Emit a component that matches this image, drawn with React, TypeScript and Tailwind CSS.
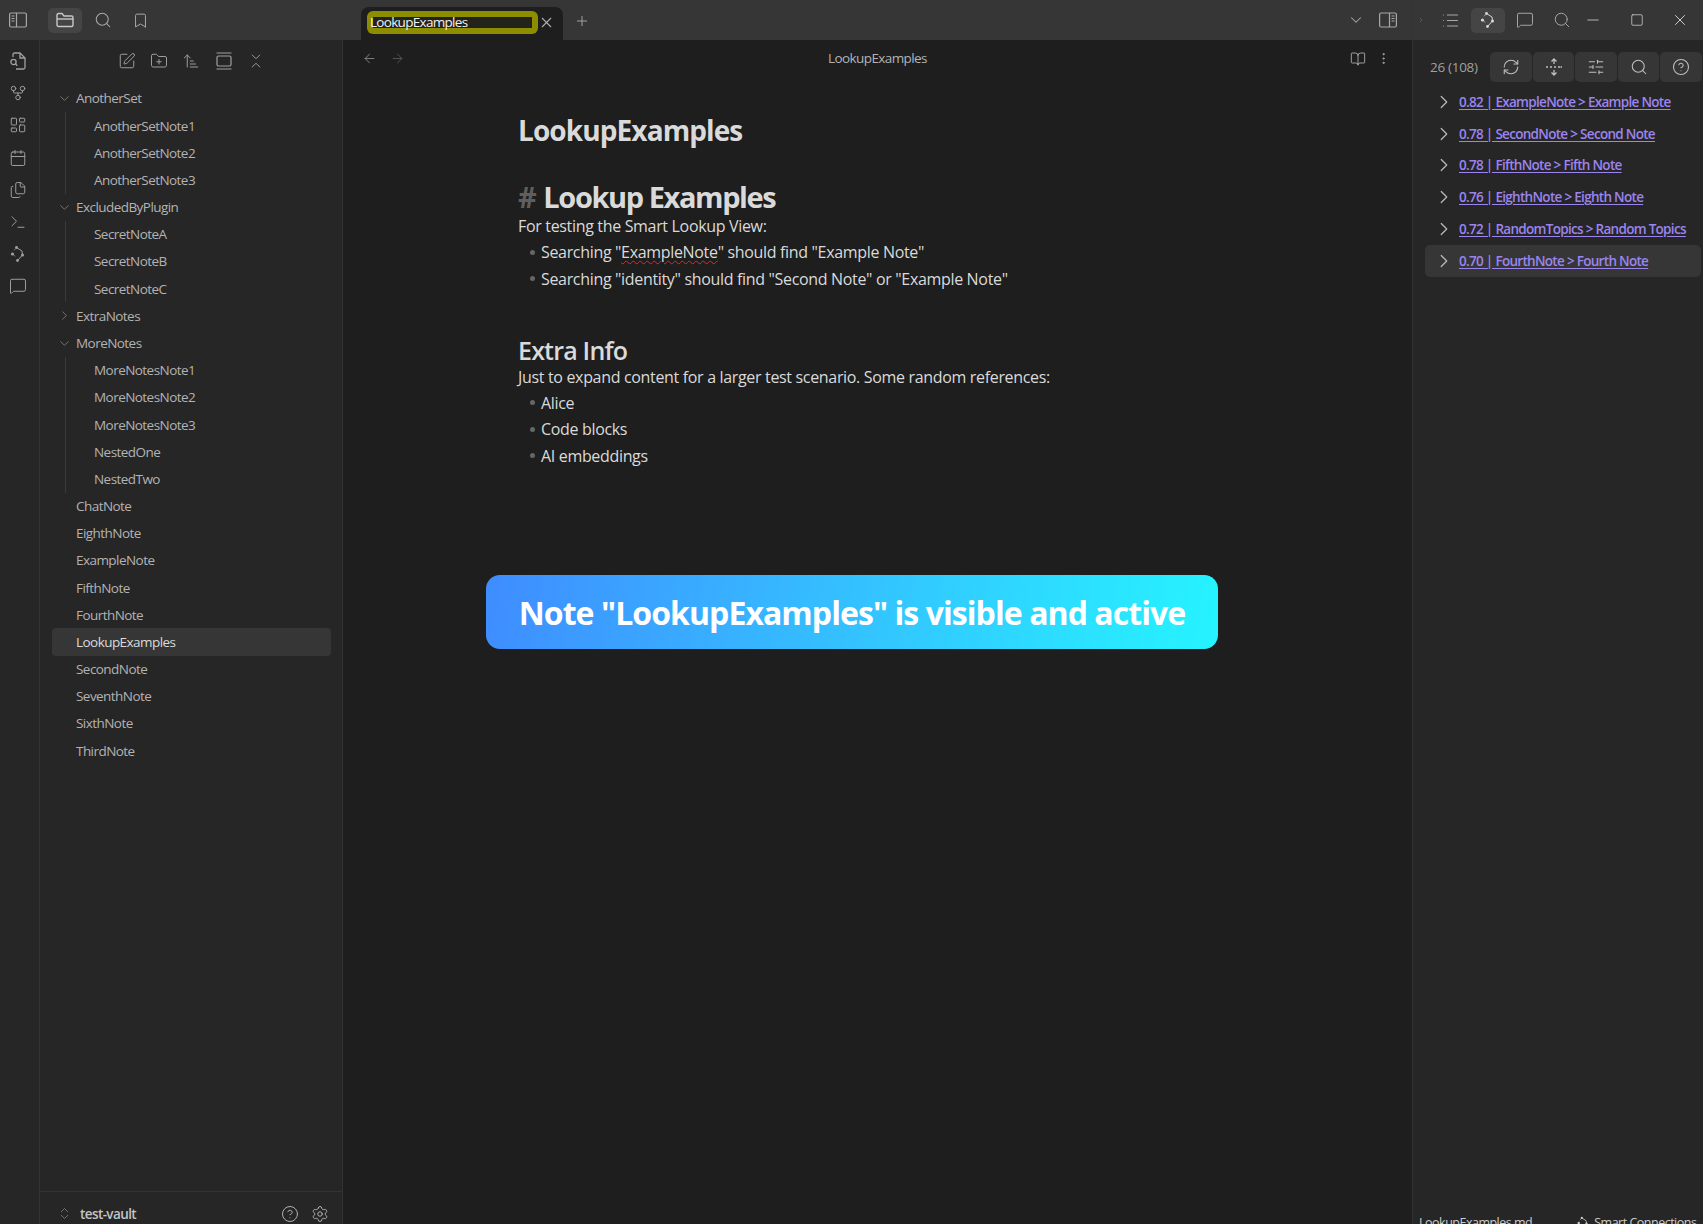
import React from 'react';
import {
  ArrowLeft, ArrowRight, BookOpen, Bookmark, Calendar, ChevronDown, ChevronRight, ChevronsDownUp, ChevronsUpDown,
  CircleHelp, Files, FolderPlus, GitFork, LayoutDashboard, List, MessageSquare, Minus, MoreVertical, Plus,
  RefreshCw, Search, Settings, SlidersHorizontal, Square, SquarePen, Terminal, X, ArrowUpNarrowWide,
} from 'lucide-react';

const SmartIcon = ({ size = 18 }: { size?: number }) => (
  <svg width={size} height={size} viewBox="0 0 18 18" fill="none" stroke="currentColor" strokeWidth="1">
    <path d="M7.500 2.500 L13 6 L13.500 10 L8.500 15.500" />
    <path d="M7.500 2.500 L5 5.500" strokeDasharray="1.200 1.200" />
    <path d="M3.500 9 L7 12" strokeDasharray="1.200 1.200" />
    <circle cx="7.500" cy="2.500" r="1.400" fill="currentColor" stroke="none" />
    <circle cx="3.500" cy="9" r="1.600" fill="currentColor" stroke="none" />
    <circle cx="13.500" cy="10" r="1.500" fill="currentColor" stroke="none" />
    <circle cx="8.500" cy="15.500" r="1.400" fill="currentColor" stroke="none" />
  </svg>
);

const SidebarToggle = ({ right }: { right?: boolean }) => (
  <svg width="18" height="16" viewBox="0 0 18 16" fill="none" stroke="currentColor" strokeWidth="1.2">
    <rect x="0.6" y="1" width="16.8" height="14" rx="1.5" />
    <path d={right ? 'M10.5 1v14' : 'M7.5 1v14'} />
    <path d={right ? 'M12.5 4h3M12.5 6.5h3M12.5 9h3' : 'M2.5 4h3M2.5 6.5h3M2.5 9h3'} />
  </svg>
);

const FolderIcon = () => (
  <svg width="18" height="16" viewBox="0 0 18 16" fill="none" stroke="currentColor" strokeWidth="1.4">
    <path d="M1 3a1.5 1.5 0 0 1 1.5-1.5H6L8 4h7.5A1.5 1.5 0 0 1 17 5.5V13a1.5 1.5 0 0 1-1.5 1.5h-13A1.5 1.5 0 0 1 1 13Z" />
    <path d="M1 7h16" />
  </svg>
);

const NoteSearchIcon = () => (
  <svg width="18" height="18" viewBox="0 0 18 18" fill="none" stroke="currentColor" strokeWidth="1.3">
    <path d="M4 5V2.5A1.5 1.5 0 0 1 5.500 1H11l5 5v9.500a1.500 1.500 0 0 1-1.500 1.500H7" />
    <path d="M11 1v5h5" />
    <circle cx="4.500" cy="10" r="2.600" />
    <path d="m6.500 12 1.800 1.800" />
  </svg>
);

const StackIcon = () => (
  <svg width="18" height="18" viewBox="0 0 18 18" fill="none" stroke="currentColor" strokeWidth="1.2">
    <path d="M1.500 1h15M1.500 17h15" />
    <rect x="2" y="4" width="14" height="10" rx="1.500" />
  </svg>
);

const FoldIcon = () => (
  <svg width="18" height="18" viewBox="0 0 18 18" fill="none" stroke="currentColor" strokeWidth="1.3">
    <path d="M1 9h2M5 9h2M9 9h2M13 9h2M15.500 9h1.500" />
    <path d="M9 1v5M6.500 3.500 9 1l2.500 2.500M9 17v-5M6.500 14.500 9 17l2.500-2.500" />
  </svg>
);

const tree = [
  { name: 'AnotherSet', open: true, kids: ['AnotherSetNote1', 'AnotherSetNote2', 'AnotherSetNote3'] },
  { name: 'ExcludedByPlugin', open: true, kids: ['SecretNoteA', 'SecretNoteB', 'SecretNoteC'] },
  { name: 'ExtraNotes', open: false, kids: [] },
  { name: 'MoreNotes', open: true, kids: ['MoreNotesNote1', 'MoreNotesNote2', 'MoreNotesNote3', 'NestedOne', 'NestedTwo'] },
];
const notes = ['ChatNote', 'EighthNote', 'ExampleNote', 'FifthNote', 'FourthNote', 'LookupExamples', 'SecondNote', 'SeventhNote', 'SixthNote', 'ThirdNote'];
const results = [
  '0.82 | ExampleNote > Example Note',
  '0.78 | SecondNote > Second Note',
  '0.78 | FifthNote > Fifth Note',
  '0.76 | EighthNote > Eighth Note',
  '0.72 | RandomTopics > Random Topics',
  '0.70 | FourthNote > Fourth Note',
];

const Bullet = ({ children }: { children: React.ReactNode }) => (
  <div className="flex items-center h-[26.4px] pl-[12px]">
    <span className="w-[5px] h-[5px] rounded-full bg-[#666666] mr-[6px] shrink-0" />
    <span>{children}</span>
  </div>
);

export default function App() {
  return (
    <div className="relative w-[1703px] h-[1224px] overflow-hidden flex flex-col bg-[#1e1e1e] text-[#dadada] font-['Open_Sans',sans-serif]">
      {/* Title bar */}
      <div className="h-10 shrink-0 flex bg-[#363636] text-[#a8a8a8]">
        <div className="w-[343px] shrink-0 flex items-center">
          <div className="w-[36px] flex justify-center"><SidebarToggle /></div>
          <div className="ml-[12px] w-[34px] h-[25px] rounded-[5px] bg-[#454545] text-[#c8c8c8] flex items-center justify-center"><FolderIcon /></div>
          <div className="ml-[4px] w-[34px] flex justify-center"><Search size={18} strokeWidth={1.4} /></div>
          <div className="ml-[3px] w-[34px] flex justify-center"><Bookmark size={17} strokeWidth={1.4} /></div>
        </div>
        <div className="flex-1 flex items-end pl-[18px]">
          <div className="w-[202px] h-[33px] rounded-t-[8px] bg-[#1e1e1e] flex items-center pl-[6px] pb-[2px]">
            <div className="relative w-[171px] h-[23px] rounded-[6px] bg-[#8d8d00] flex items-center">
              <div className="absolute left-[6px] top-[6px] right-[6px] bottom-[6px] bg-[#23231c]" />
              <span className="relative pl-[3px] text-[13.5px] tracking-[-0.7px] text-[#f2f2f2]">LookupExamples</span>
            </div>
            <X size={17} strokeWidth={1.5} className="text-[#b0b0b0]" />
          </div>
          <div className="ml-[11px] mb-[11px]"><Plus size={16} strokeWidth={1.4} /></div>
          <div className="flex-1 flex justify-end items-center h-full pr-[15px]">
            <ChevronDown size={18} strokeWidth={1.4} className="mr-[14px]" />
            <SidebarToggle right />
          </div>
        </div>
        <div className="w-[291px] shrink-0 flex items-center border-l border-[#333333]">
          <ChevronRight size={8} strokeWidth={1.5} className="ml-[4px] text-[#777777]" />
          <div className="ml-[15px] w-[20px] flex justify-center"><List size={19} strokeWidth={1.3} /></div>
          <div className="ml-[11px] w-[34px] h-[25px] rounded-[5px] bg-[#454545] text-[#d8d8d8] flex items-center justify-center"><SmartIcon /></div>
          <div className="ml-[10px] w-[20px] flex justify-center"><MessageSquare size={18} strokeWidth={1.3} /></div>
          <div className="ml-[17px] w-[20px] flex justify-center"><Search size={18} strokeWidth={1.3} /></div>
          <div className="ml-[11px] w-[20px] flex justify-center text-[#dddddd]"><Minus size={18} strokeWidth={1} /></div>
          <div className="ml-[24px] w-[20px] flex justify-center text-[#dddddd]"><Square size={14} strokeWidth={1.2} /></div>
          <div className="ml-[23px] w-[20px] flex justify-center text-[#dddddd]"><X size={18} strokeWidth={1.2} /></div>
        </div>
      </div>

      <div className="flex-1 flex min-h-0">
        {/* Ribbon */}
        <div className="w-10 shrink-0 bg-[#262626] border-r border-[#333333] flex flex-col items-center pt-[12px] pr-[3px] gap-[14.2px] text-[#a0a0a0]">
          <NoteSearchIcon />
          <GitFork size={18} strokeWidth={1.3} />
          <LayoutDashboard size={18} strokeWidth={1.3} />
          <Calendar size={18} strokeWidth={1.3} />
          <Files size={18} strokeWidth={1.3} />
          <Terminal size={18} strokeWidth={1.3} />
          <SmartIcon />
          <MessageSquare size={18} strokeWidth={1.3} />
        </div>

        {/* File explorer */}
        <div className="w-[303px] shrink-0 bg-[#262626] border-r border-[#333333] flex flex-col text-[#b3b3b3]">
          <div className="h-[41px] mb-[4px] shrink-0 flex items-center pl-[78px] gap-[14.2px] text-[#a0a0a0]">
            <SquarePen size={18} strokeWidth={1.3} />
            <FolderPlus size={18} strokeWidth={1.3} />
            <ArrowUpNarrowWide size={18} strokeWidth={1.3} />
            <StackIcon />
            <ChevronsDownUp size={18} strokeWidth={1.3} />
          </div>
          <div className="flex-1 pl-[12px] pr-[11px] text-[13.5px] tracking-[-0.55px]">
            {tree.map((folder) => (
              <div key={folder.name}>
                <div className="h-[27.18px] flex items-center">
                  {folder.open
                    ? <ChevronDown size={15} strokeWidth={1.4} className="ml-[5px] text-[#7d7d7d]" />
                    : <ChevronRight size={15} strokeWidth={1.4} className="ml-[5px] text-[#7d7d7d]" />}
                  <span className="ml-[4px]">{folder.name}</span>
                </div>
                {folder.kids.length > 0 && (
                  <div className="ml-[13px] border-l border-[#3a3a3a] pl-[28px]">
                    {folder.kids.map((k) => <div key={k} className="h-[27.18px] flex items-center">{k}</div>)}
                  </div>
                )}
              </div>
            ))}
            {notes.map((n) => (
              <div key={n} className={`h-[27.18px] flex items-center pl-[24px] rounded-[4px] ${n === 'LookupExamples' ? 'bg-[#363636] text-[#dadada]' : ''}`}>{n}</div>
            ))}
          </div>
          <div className="h-[33px] shrink-0 border-t border-[#333333] flex items-start pl-[16px] pr-[13px] pt-[13px]">
            <ChevronsUpDown size={15} strokeWidth={1.4} className="ml-[1px] mt-[1px] text-[#7d7d7d]" />
            <span className="ml-[8px] flex-1 text-[13.5px] leading-[18px] font-semibold tracking-[-0.6px] text-[#c4c4c4]">test-vault</span>
            <CircleHelp size={18} strokeWidth={1.3} className="mr-[12px]" />
            <Settings size={18} strokeWidth={1.3} />
          </div>
        </div>

        {/* Editor */}
        <div className="flex-1 min-w-0 flex flex-col">
          <div className="h-[37px] shrink-0 flex items-center pl-[19px] pr-[21px] text-[#8a8a8a]">
            <ArrowLeft size={15} strokeWidth={1.4} />
            <ArrowRight size={15} strokeWidth={1.4} className="ml-[13px] text-[#5a5a5a]" />
            <span className="flex-1 text-center text-[13.5px] tracking-[-0.6px] text-[#b3b3b3]">LookupExamples</span>
            <BookOpen size={16} strokeWidth={1.4} className="text-[#a8a8a8]" />
            <MoreVertical size={15} strokeWidth={1.6} className="ml-[10px] text-[#a8a8a8]" />
          </div>
          <div className="pl-[175px] text-[16px] tracking-[-0.33px] leading-[26px]">
            <div className="mt-[33px] h-[40px] text-[28px] leading-[40px] font-bold tracking-[-0.9px]">LookupExamples</div>
            <div className="mt-[29px] h-[36px] text-[29px] leading-[36px] font-bold tracking-[-1.4px]">
              <span className="text-[#5e5e5e] mr-[8px]">#</span>Lookup Examples
            </div>
            <div className="mt-[-2px] h-[26px]">For testing the Smart Lookup View:</div>
            <Bullet>
              Searching "<span className="underline decoration-wavy decoration-[#d03030] decoration-1 underline-offset-[2px]">ExampleNote</span>" should find "Example Note"
            </Bullet>
            <Bullet>Searching "identity" should find "Second Note" or "Example Note"</Bullet>
            <div className="mt-[40px] h-[36px] text-[25px] leading-[36px] font-semibold tracking-[-0.8px]">Extra Info</div>
            <div className="h-[26px] mt-[-4px]">Just to expand content for a larger test scenario. Some random references:</div>
            <Bullet>Alice</Bullet>
            <Bullet>Code blocks</Bullet>
            <Bullet>AI embeddings</Bullet>
          </div>
        </div>

        {/* Lookup panel */}
        <div className="w-[291px] shrink-0 bg-[#262626] border-l border-[#333333] flex flex-col">
          <div className="h-[42px] shrink-0 mt-[12px] flex items-start pl-[17px] pr-[1px]">
            <span className="w-[60px] h-[30px] flex items-center text-[13.5px] tracking-[-0.3px] text-[#a0a0a0]">26 (108)</span>
            <div className="flex gap-[1px] text-[#c0c0c0]">
              <div className="w-[42px] h-[30px] rounded-[5px] bg-[#363636] flex items-center justify-center"><RefreshCw size={18} strokeWidth={1.4} /></div>
              <div className="w-[41px] h-[30px] rounded-[5px] bg-[#363636] flex items-center justify-center"><FoldIcon /></div>
              <div className="w-[42px] h-[30px] rounded-[5px] bg-[#363636] flex items-center justify-center"><SlidersHorizontal size={18} strokeWidth={1.4} /></div>
              <div className="w-[41px] h-[30px] rounded-[5px] bg-[#363636] flex items-center justify-center"><Search size={18} strokeWidth={1.4} /></div>
              <div className="w-[42px] h-[30px] rounded-[5px] bg-[#363636] flex items-center justify-center"><CircleHelp size={18} strokeWidth={1.4} /></div>
            </div>
          </div>
          <div className="pl-[12px] pr-[2px] mt-[-8px]">
            {results.map((r, i) => (
              <div key={r} className={`h-[31.8px] flex items-center rounded-[5px] pl-[8px] ${i === 5 ? 'bg-[#363636]' : ''}`}>
                <ChevronRight size={22} strokeWidth={1.3} className="text-[#bcbcbc] shrink-0" />
                <span className="ml-[4px] text-[13.5px] font-semibold tracking-[-0.7px] underline underline-offset-[2px] text-[#9b84ee] whitespace-nowrap">{r}</span>
              </div>
            ))}
          </div>
        </div>
      </div>

      {/* Toast */}
      <div className="absolute left-[486px] top-[575px] w-[732px] h-[74px] pt-[1px] rounded-[14px] bg-linear-100 from-[#3f8cff] to-[#25f4ff] flex items-center justify-center text-white text-[32px] font-bold tracking-[-0.93px]">
        Note "LookupExamples" is visible and active
      </div>

      {/* Status bar, clipped by the window edge */}
      <div className="absolute left-[1419px] top-[1214px] flex items-center text-[12.5px] text-[#cccccc] whitespace-nowrap">
        <span className="tracking-[-0.5px]">LookupExamples.md</span>
        <span className="ml-[44px]"><SmartIcon size={14} /></span>
        <span className="ml-[4px] tracking-[-0.5px]">Smart Connections</span>
      </div>
    </div>
  );
}
